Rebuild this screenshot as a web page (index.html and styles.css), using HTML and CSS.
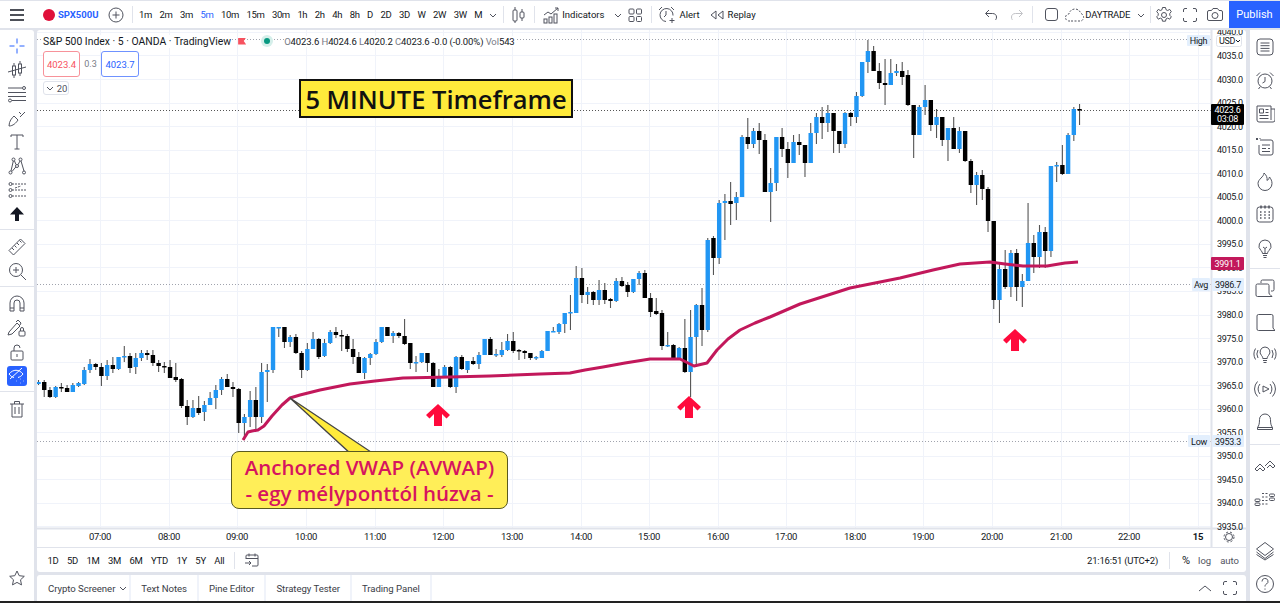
FILE: index.html
```html
<!DOCTYPE html>
<html>
  <head>
    <title>S&amp;P 500 Index - TradingView</title>
    <meta charset="UTF-8" />
    <link rel="stylesheet" href="styles.css">
  </head>

  <body>
    <div class="topbar">
      <div class="hamburger">
        <svg class="ic" width="20" height="20" viewBox="0 0 20 20"><path d="M3 5h14M3 10h14M3 15h14" stroke="#131722" stroke-width="1.5"/></svg>
      </div>
      <div class="symbol">
        <span class="symbol_dot"></span>
        <span class="symbol_name">SPX500USD</span>
      </div>
      <svg class="ic plus" width="18" height="18" viewBox="0 0 18 18"><circle cx="9" cy="9" r="7"/><path d="M9 5.500v7M5.500 9h7"/></svg>
      <span class="sep"></span>
      <div class="intervals">
        <span>1m</span><span>2m</span><span>3m</span><span class="current">5m</span><span>10m</span><span>15m</span><span>30m</span><span>1h</span><span>2h</span><span>4h</span><span>8h</span><span>D</span><span>2D</span><span>3D</span><span>W</span><span>2W</span><span>3W</span><span>M</span>
      </div>
      <svg class="ic chevron" width="10" height="10" viewBox="0 0 10 10"><path d="M2 4l3 3 3-3"/></svg>
      <span class="sep sep_candle"></span>
      <svg class="ic tool_candle" width="18" height="20" viewBox="0 0 18 20"><path d="M5 2v3M5 16v2M12 4v3M12 13v3"/><rect x="3" y="5" width="4" height="11" rx="1"/><rect x="10" y="7" width="4" height="6" rx="1"/></svg>
      <span class="sep sep_ind"></span>
      <svg class="ic tool_ind" width="20" height="20" viewBox="0 0 20 20"><path d="M2 10l4-3 3 2 7-6M13 3h3v3"/><rect x="2" y="14" width="3" height="4"/><rect x="7" y="12" width="3" height="6"/><rect x="12" y="9" width="3" height="9"/></svg>
      <span class="tb_label ind_label">Indicators</span>
      <svg class="ic chevron ind_chevron" width="10" height="10" viewBox="0 0 10 10"><path d="M2 4l3 3 3-3"/></svg>
      <svg class="ic tool_grid" width="16" height="16" viewBox="0 0 16 16"><rect x="2" y="2" width="5" height="5" rx="1"/><rect x="9.500" y="2" width="5" height="5" rx="1"/><rect x="2" y="9.500" width="5" height="5" rx="1"/><rect x="9.500" y="9.500" width="5" height="5" rx="1"/></svg>
      <span class="sep sep_alert"></span>
      <svg class="ic tool_alert" width="20" height="20" viewBox="0 0 20 20"><path d="M9 16.500a6.500 6.500 0 1 1 7-6M9 6v4l-2 2M2 5l3-3M17 5l-3-3M15 13v5M12.500 15.500h5"/></svg>
      <span class="tb_label alert_label">Alert</span>
      <svg class="ic tool_replay" width="18" height="14" viewBox="0 0 18 14"><path d="M8 3L3 7l5 4zM15 3l-5 4 5 4z"/></svg>
      <span class="tb_label replay_label">Replay</span>

      <div class="topbar_right">
        <svg class="ic" width="16" height="16" viewBox="0 0 16 16"><path d="M6 3L2.500 6.500 6 10M3 6.500h6.500c2.500 0 4 1.500 4 3.500s-.5 2-1 3"/></svg>
        <svg class="ic redo" width="16" height="16" viewBox="0 0 16 16"><path d="M10 3l3.500 3.500L10 10M13 6.500H6.500C4 6.500 2.500 8 2.500 10s.5 2 1 3"/></svg>
        <span class="sep sep_redo"></span>
        <span class="layout_box"></span>
        <svg class="ic cloud" width="20" height="14" viewBox="0 0 20 14"><path d="M5 13H4a3.500 3.500 0 0 1 0-7c.5-3 3-5 6-5s5 2 6 4.500a4 4 0 0 1 0 7.500z" stroke-dasharray="2 1.500"/></svg>
        <span class="tb_label layout_name">DAYTRADE</span>
        <svg class="ic chevron" width="10" height="10" viewBox="0 0 10 10"><path d="M2 4l3 3 3-3"/></svg>
        <span class="sep sep_layout"></span>
        <svg class="ic gear" width="18" height="18" viewBox="0 0 18 18"><path d="M7.500 1.500h3l.5 2.200 1.700.8 2-1.100 1.600 2.300-1.500 1.600v2l1.500 1.500-1.600 2.400-2-1.100-1.700.9-.5 2.200h-3l-.5-2.200-1.700-.9-2 1.100-1.600-2.400 1.500-1.500v-2L1.700 5.700l1.600-2.300 2 1.100L7 3.700z"/><circle cx="9" cy="9" r="2.500"/></svg>
        <svg class="ic full" width="16" height="16" viewBox="0 0 16 16"><path d="M1.500 5V3a1.500 1.500 0 0 1 1.500-1.500h2M11 1.500h2A1.500 1.500 0 0 1 14.500 3v2M14.500 11v2a1.500 1.500 0 0 1-1.500 1.500h-2M5 14.500H3A1.500 1.500 0 0 1 1.500 13v-2"/></svg>
        <svg class="ic camera" width="18" height="16" viewBox="0 0 18 16"><path d="M3 3.500h2.500L7 1.500h4.500l1.500 2h2a1.500 1.500 0 0 1 1.500 1.500v7a1.500 1.500 0 0 1-1.500 1.500H3A1.500 1.500 0 0 1 1.500 12V5A1.500 1.500 0 0 1 3 3.500z"/><circle cx="9" cy="8.500" r="3"/></svg>
        <button class="publish">Publish</button>
      </div>
    </div>

    <div class="main">
      <div class="left_tools">
        <div class="tool"><svg class="ic blue" width="20" height="20" viewBox="0 0 20 20"><path d="M10 2.500v5M10 12.500v5M2.500 10h5M12.500 10h5"/></svg></div>
        <div class="tool"><svg class="ic" width="20" height="20" viewBox="0 0 20 20"><path d="M1 12l18-5M7 3v3M7 15v3M13 1v3M13 13v3"/><rect x="5.500" y="6" width="3" height="9"/><rect x="11.500" y="4" width="3" height="9"/></svg></div>
        <div class="tool"><svg class="ic" width="20" height="20" viewBox="0 0 20 20"><path d="M1 4h14M1 8.500h18M1 12.500h18M5 16.500h14"/><circle cx="17" cy="4" r="1.500"/><circle cx="3" cy="16.500" r="1.500"/></svg></div>
        <div class="tool"><svg class="ic" width="20" height="20" viewBox="0 0 20 20"><path d="M2 18c0-5 3-8 5-10l4 4c-2 3-5 6-9 6zM13 9l5-5M12 4l2 2"/></svg></div>
        <div class="tool"><svg class="ic" width="20" height="20" viewBox="0 0 20 20"><path d="M4 5V3h12v2M10 3v14M7.500 17h5"/></svg></div>
        <div class="tool"><svg class="ic" width="20" height="20" viewBox="0 0 20 20"><circle cx="3.500" cy="16.500" r="1.500"/><circle cx="6.500" cy="3.500" r="1.500"/><circle cx="13.500" cy="3.500" r="1.500"/><circle cx="10" cy="10" r="1.500"/><circle cx="17" cy="16.500" r="1.500"/><path d="M4 15L6.300 5M7.500 5L9 8.500M11 8.700L13 5M14 5l3 10M5 15.500L8.800 11"/></svg></div>
        <div class="tool"><svg class="ic" width="20" height="20" viewBox="0 0 20 20"><circle cx="3.500" cy="4" r="1.500"/><circle cx="3.500" cy="10" r="1.500"/><circle cx="3.500" cy="16" r="1.500"/><path d="M5 4h14M5 10h14M5 16h14M8 8l6-2" stroke-dasharray="2 1"/></svg></div>
        <div class="tool"><svg width="20" height="20" viewBox="0 0 20 20"><path d="M10 3l7 7.500h-5V17H8v-6.500H3z" fill="#131722"/></svg></div>
        <div class="tool_sep"></div>
        <div class="tool"><svg class="ic" width="20" height="20" viewBox="0 0 20 20"><path d="M2 13.500L13.500 2 18 6.500 6.500 18zM5 11l2 2M7.500 8.500l2 2M10 6l2 2M12.500 3.500l2 2"/></svg></div>
        <div class="tool"><svg class="ic" width="20" height="20" viewBox="0 0 20 20"><circle cx="9" cy="9" r="6.500"/><path d="M9 6v6M6 9h6M14 14l5 5"/></svg></div>
        <div class="tool_sep"></div>
        <div class="tool"><svg class="ic" width="20" height="20" viewBox="0 0 20 20"><path d="M3 17V9a7 7 0 0 1 14 0v8h-4V9a3 3 0 0 0-6 0v8zM3 14h4M13 14h4"/></svg></div>
        <div class="tool"><svg class="ic" width="20" height="20" viewBox="0 0 20 20"><path d="M2 14L10 5l3 3-8 8-4 1zM9 4l2-2 3 3-1 2"/><rect x="12" y="13" width="6" height="5" rx="1"/><path d="M13.500 13v-2a1.500 1.500 0 0 1 3 0v2"/></svg></div>
        <div class="tool"><svg class="ic" width="20" height="20" viewBox="0 0 20 20"><rect x="4" y="9" width="12" height="9" rx="1"/><path d="M7 9V6a3 3 0 0 1 6 0M10 12v3"/></svg></div>
        <div class="tool tool_on"><svg class="ic white" width="18" height="18" viewBox="0 0 18 18"><path d="M1 7c4-5 10-5 14 0-1.500 2-3 3-5 3.500M1 7c1.500 2 3 3 5 3.500M2 12L14 1M8 14h.5M12 12h.5M12 16h.5M15 14h.5"/></svg></div>
        <div class="tool_sep"></div>
        <div class="tool"><svg class="ic" width="20" height="20" viewBox="0 0 20 20"><path d="M3 5h14M7.500 5V2.500h5V5M5 5v13h10V5M8 8v7M12 8v7"/></svg></div>
        <div class="tool star"><svg class="ic" width="18" height="18" viewBox="0 0 18 18"><path d="M9 2l2.200 4.700 5.100.6-3.800 3.500 1 5.100L9 13.400l-4.500 2.500 1-5.100L1.700 7.300l5.100-.6z"/></svg></div>
      </div>

      <div class="center">
        <div class="chart_card">
          <div class="chart_wrap">
            <svg id="chart" class="chart_svg" width="1209" height="517" viewBox="37 30 1209 517"></svg>

            <div class="legend">
              <div class="legend_row">
                <span class="legend_title">S&amp;P 500 Index · 5 · OANDA · TradingView</span>
                <span class="legend_flag"></span>
                <span class="legend_dot"></span>
                <span class="ohlc"><i>O</i>4023.6 <i>H</i>4024.6 <i>L</i>4020.2 <i>C</i>4023.6 -0.0 (-0.00%) <i>Vol</i>543</span>
              </div>
              <div class="quote_row">
                <span class="quote sell">4023.4</span>
                <span class="spread">0.3</span>
                <span class="quote buy">4023.7</span>
              </div>
              <div class="lots">
                <svg class="ic" width="10" height="10" viewBox="0 0 10 10"><path d="M2 4l3 3 3-3"/></svg>
                <span>20</span>
              </div>
            </div>

            <div class="timeframe_note">5 MINUTE Timeframe</div>
            <div class="avwap_note">Anchored VWAP (AVWAP)<br>- egy mélyponttól húzva -</div>
          </div>

          <div class="range_bar">
            <div class="ranges"><span>1D</span><span>5D</span><span>1M</span><span>3M</span><span>6M</span><span>YTD</span><span>1Y</span><span>5Y</span><span>All</span></div>
            <span class="sep sep_range"></span>
            <svg class="ic" width="16" height="16" viewBox="0 0 16 16"><path d="M2 7V4a1 1 0 0 1 1-1h10a1 1 0 0 1 1 1v9a1 1 0 0 1-1 1H8M2 6.500h12M5 1.500v3M11 1.500v3M1 11h6M5 9l2 2-2 2"/></svg>
            <div class="range_right">
              <span class="clock">21:16:51 (UTC+2)</span>
              <span class="sep"></span>
              <span class="pct">%</span>
              <span class="log">log</span>
              <span class="auto">auto</span>
            </div>
          </div>
        </div>

        <div class="tabs">
          <div class="tab tab_first">Crypto Screener
            <svg class="ic" width="10" height="10" viewBox="0 0 10 10"><path d="M2 4l3 3 3-3"/></svg>
          </div>
          <div class="tab">Text Notes</div>
          <div class="tab">Pine Editor</div>
          <div class="tab">Strategy Tester</div>
          <div class="tab">Trading Panel</div>
          <div class="tabs_right">
            <svg class="ic" width="14" height="10" viewBox="0 0 14 10"><path d="M1 8l6-5 6 5"/></svg>
            <svg class="ic" width="16" height="16" viewBox="0 0 16 16"><path d="M1.500 5V3a1.500 1.500 0 0 1 1.500-1.500h2M11 1.500h2A1.500 1.500 0 0 1 14.500 3v2M14.500 11v2a1.500 1.500 0 0 1-1.500 1.500h-2M5 14.500H3A1.500 1.500 0 0 1 1.500 13v-2"/></svg>
          </div>
        </div>
      </div>

      <div class="right_tools">
        <div class="side"><svg class="ic" width="20" height="20" viewBox="0 0 20 20"><rect x="2" y="2" width="16" height="16" rx="3"/><path d="M5.500 6h9M5.500 8.700h9M5.500 11.400h9M5.500 14h9"/></svg></div>
        <div class="side"><svg class="ic" width="20" height="20" viewBox="0 0 20 20"><circle cx="10" cy="11" r="7"/><path d="M10 7v4.500L7.500 13M1.500 6L5 2.500M18.500 6L15 2.500M5 17l-1.500 2M15 17l1.500 2"/></svg></div>
        <div class="side"><svg class="ic" width="20" height="20" viewBox="0 0 20 20"><path d="M16 16V2H2v14a2 2 0 0 0 2 2h14a2 2 0 0 0 2-2V5h-4M4.500 5h4v4h-4zM10.500 5.500h3M10.500 8.500h3M4.500 11.500h9M4.500 14.500h9"/></svg></div>
        <div class="side"><svg class="ic" width="20" height="20" viewBox="0 0 20 20"><path d="M5 3h11a2 2 0 0 1 2 2v11a2 2 0 0 1-2 2H6a2 2 0 0 1-2-2V8M7 8h8M7 11.500h4M13 11.500h2M7 14.500h8M1 1l2 2M3 1L1 3M5 1v1" /></svg></div>
        <div class="side"><svg class="ic" width="20" height="20" viewBox="0 0 20 20"><path d="M9 2C9 6 3 8 3 12.500a7 7 0 0 0 14 0c0-2.500-1-4.500-2.500-6.500-.5 2-1.500 3-2.500 3.500C12.500 7 11.500 4 9 2z"/></svg></div>
        <div class="side"><svg class="ic" width="20" height="20" viewBox="0 0 20 20"><rect x="2" y="3" width="16" height="15" rx="2.500"/><path d="M6 1.500v3M10 1.500v3M14 1.500v3M5 8h1.500M9.200 8h1.500M13.500 8h1.500M5 11h1.500M9.200 11h1.500M13.500 11h1.500M5 14h1.500M9.200 14h1.500M13.500 14h1.500" stroke-width="1.500"/></svg></div>
        <div class="side"><svg class="ic" width="20" height="20" viewBox="0 0 20 20"><path d="M10 2a6 6 0 0 0-4 10.500c1 1 1.500 2 1.500 3h5c0-1 .5-2 1.500-3A6 6 0 0 0 10 2zM8 17.500h4M8.500 19.500h3M10 15.500v-5M8 9l2 1.500L12 9"/></svg></div>
        <div class="side_sep"></div>
        <div class="side"><svg class="ic" width="22" height="20" viewBox="0 0 22 20"><path d="M7 5V3.500A1.500 1.500 0 0 1 8.500 2h10A1.500 1.500 0 0 1 20 3.500v8a1.500 1.500 0 0 1-1.500 1.500H17M3.500 6h10A1.500 1.500 0 0 1 15 7.500V15a1.500 1.500 0 0 0 1 1.500l2 2H3.500A1.500 1.500 0 0 1 2 17V7.500A1.500 1.500 0 0 1 3.500 6z"/></svg></div>
        <div class="side"><svg class="ic" width="20" height="20" viewBox="0 0 20 20"><path d="M3.500 2.500h13A1.500 1.500 0 0 1 18 4v12l2 2.500H3.500A1.500 1.500 0 0 1 2 17V4a1.500 1.500 0 0 1 1.500-1.500z"/></svg></div>
        <div class="side"><svg class="ic" width="24" height="20" viewBox="0 0 24 20"><path d="M12 2a5 5 0 0 0-3.500 8.500c1 1 1.300 2 1.300 3h4.400c0-1 .3-2 1.300-3A5 5 0 0 0 12 2zM10 15.500h4M10.500 17.500h3M5 5a8 8 0 0 0 0 8M2.500 3.500a11 11 0 0 0 0 11M19 5a8 8 0 0 1 0 8M21.500 3.500a11 11 0 0 1 0 11"/></svg></div>
        <div class="side"><svg class="ic" width="22" height="20" viewBox="0 0 22 20"><path d="M9 7l6 3-6 3zM6 5a7.500 7.500 0 0 0 0 10M3.500 2.500a11 11 0 0 0 0 15M16 5a7.500 7.500 0 0 1 0 10M18.500 2.500a11 11 0 0 1 0 15"/></svg></div>
        <div class="side"><svg class="ic" width="20" height="20" viewBox="0 0 20 20"><path d="M10 2a5.500 5.500 0 0 0-5.500 5.500c0 4-.5 6-2 8h15c-1.500-2-2-4-2-8A5.500 5.500 0 0 0 10 2zM2.500 15.500v2h15v-2"/></svg></div>
        <div class="side_sep side_sep_low"></div>
        <div class="side"><svg class="ic" width="22" height="18" viewBox="0 0 22 18"><path d="M1 11l5-5 4 4 1 1-2 2-3-3-3 3zM11 8l5-5 5 5-2 2-3-3-3 3" /></svg></div>
        <div class="side"><svg class="ic dotted" width="22" height="18" viewBox="0 0 22 18"><path d="M9 2v1M9 5.500v1M9 9v1M9 12.500v1M12.500 2v1M12.500 5.500v1M12.500 9v1M12.500 12.500v1" stroke-width="2"/><rect x="1" y="8" width="5" height="2.500" rx="1"/><rect x="1" y="12" width="5" height="2.500" rx="1"/><rect x="15.500" y="3" width="5" height="2.500" rx="1"/><rect x="15.500" y="7" width="5" height="2.500" rx="1"/></svg></div>
        <div class="side side_bottom"><svg class="ic" width="20" height="20" viewBox="0 0 20 20"><path d="M10 1.500L18.500 8 10 14.500 1.500 8zM1.500 11l8.500 6.500 8.500-6.500M1.500 13.500L10 19l8.500-5.500"/></svg></div>
        <div class="side"><svg class="ic" width="22" height="22" viewBox="0 0 22 22"><circle cx="11" cy="11" r="8.500"/><path d="M8 8.500a3 3 0 1 1 4.500 2.500c-1 .6-1.500 1.200-1.500 2.500M11 15.500v1.200"/></svg></div>
      </div>
    </div>
    <div class="bottom_strip"></div>

    <script src="chart.js"></script>
  </body>
</html>
```

FILE: styles.css
```css
* {
  box-sizing: border-box;
}

body {
  margin: 0;
  width: 1280px;
  height: 603px;
  overflow: hidden;
  display: flex;
  flex-direction: column;
  background: #e0e3eb;
  font-family: "Roboto", "Noto Sans", sans-serif;
  font-size: 9.5px;
  color: #131722;
}

svg {
  display: block;
  flex: none;
}

.ic {
  fill: none;
  stroke: #50535e;
  stroke-width: 1;
}

.ic.blue {
  stroke: #2962ff;
}

.ic.white {
  stroke: #fff;
}

/* top bar */
.topbar {
  height: 28px;
  flex: none;
  display: flex;
  align-items: center;
  background: #fff;
  border-top: 1px solid #e0e3eb;
}

.hamburger {
  margin-left: 7px;
}

.symbol {
  display: flex;
  align-items: center;
  margin-left: 16px;
}

.symbol_dot {
  width: 12px;
  height: 12px;
  border-radius: 50%;
  background: #e0103a;
}

.symbol_name {
  width: 41px;
  margin-left: 3px;
  overflow: hidden;
  white-space: nowrap;
  font-weight: 700;
  color: #2962ff;
}

.plus {
  margin-left: 8px;
}

.sep {
  width: 1px;
  height: 17px;
  background: #e0e3eb;
  flex: none;
}

.topbar > .sep:first-of-type {
  margin-left: 7px;
}

.intervals {
  display: flex;
  gap: 7.65px;
  margin-left: 6px;
  font-size: 9.5px;
  letter-spacing: -0.4px;
}

.current {
  color: #2962ff;
}

.chevron {
  margin-left: 6px;
}

.sep_candle {
  margin-left: 5px;
}

.tool_candle {
  margin-left: 6px;
}

.sep_ind {
  margin-left: 6px;
}

.tool_ind {
  margin-left: 7px;
}

.tb_label {
  margin-left: 5px;
  white-space: nowrap;
}

.ind_label {
  margin-left: 0;
}

.ind_chevron {
  margin-left: 9px;
}

.tool_grid {
  margin-left: 4px;
}

.sep_alert {
  margin-left: 8px;
}

.tool_alert {
  margin-left: 5px;
}

.alert_label {
  margin-left: 2px;
}

.tool_replay {
  margin-left: 8px;
}

.replay_label {
  margin-left: 2px;
}

.topbar_right {
  margin-left: auto;
  display: flex;
  align-items: center;
  height: 100%;
}

.redo {
  margin-left: 10px;
  opacity: 0.35;
}

.sep_redo {
  margin-left: 7px;
}

.layout_box {
  width: 13px;
  height: 13px;
  margin-left: 12px;
  border: 1px solid #50535e;
  border-radius: 3px;
}

.cloud {
  margin-left: 7px;
}

.layout_name {
  margin-left: 0;
  letter-spacing: -0.3px;
}

.sep_layout {
  margin-left: 4px;
}

.gear {
  margin-left: 4px;
}

.full {
  margin-left: 9px;
}

.camera {
  margin-left: 8px;
}

.publish {
  width: 51px;
  height: 100%;
  margin-left: 5px;
  border: none;
  background: #2962ff;
  color: #fff;
  font: inherit;
  font-size: 11px;
}

/* layout under the top bar */
.main {
  flex: 1;
  min-height: 0;
  display: flex;
  margin-top: 2px;
}

.left_tools {
  width: 34px;
  flex: none;
  display: flex;
  flex-direction: column;
  align-items: center;
  padding-top: 4px;
  background: #fff;
  border-top-right-radius: 3px;
}

.tool {
  width: 34px;
  height: 24px;
  display: flex;
  align-items: center;
  justify-content: center;
}

.tool_on {
  width: 20px;
  height: 20px;
  margin: 2px 0;
  background: #2962ff;
  border-radius: 3px;
}

.tool_sep {
  width: 100%;
  height: 1px;
  margin: 3px 0 5px;
  background: #e0e3eb;
}

.star {
  margin-top: auto;
  margin-bottom: 11px;
}

.center {
  width: 1209px;
  flex: none;
  margin: 0 4px 0 3px;
  display: flex;
  flex-direction: column;
  gap: 3px;
}

.chart_card {
  height: 542px;
  flex: none;
  background: #fff;
  border-radius: 3px;
  display: flex;
  flex-direction: column;
  overflow: hidden;
}

.chart_wrap {
  position: relative;
  height: 517px;
  flex: none;
}

/* legend on the chart */
.legend {
  position: absolute;
  top: 4px;
  left: 6px;
}

.legend_row {
  display: flex;
  align-items: center;
  height: 14px;
}

.legend_title {
  font-size: 10.4px;
  white-space: nowrap;
  background: #fff;
}

.legend_flag {
  width: 8px;
  height: 7px;
  margin-left: 7px;
  background: #f7525f;
  clip-path: polygon(0 0, 100% 0, 70% 50%, 100% 100%, 0 100%);
}

.legend_dot {
  width: 6px;
  height: 6px;
  margin-left: 18px;
  border-radius: 50%;
  background: #089981;
  box-shadow: 0 0 0 3px #d5efea;
}

.ohlc {
  margin-left: 14px;
  font-size: 9.5px;
  letter-spacing: -0.1px;
  white-space: nowrap;
  background: #fff;
}

.ohlc i {
  font-style: normal;
  color: #787b86;
}

.quote_row {
  display: flex;
  align-items: center;
  margin-top: 3px;
}

.quote {
  width: 37px;
  height: 26px;
  display: flex;
  align-items: center;
  justify-content: center;
  font-size: 9.5px;
  border-radius: 3px;
  background: #fff;
}

.sell {
  color: #f7525f;
  border: 1px solid #f7929a;
}

.buy {
  width: 38px;
  color: #2962ff;
  border: 1px solid #6f92ff;
}

.spread {
  width: 21px;
  text-align: center;
  font-size: 9px;
  color: #787b86;
}

.lots {
  width: 26px;
  height: 14px;
  margin-top: 4px;
  display: flex;
  align-items: center;
  justify-content: center;
  gap: 2px;
  font-size: 9.5px;
  color: #50535e;
  border: 1px solid #e0e3eb;
  border-radius: 3px;
  background: #fff;
}

.timeframe_note {
  position: absolute;
  left: 262px;
  top: 49px;
  width: 274px;
  height: 39px;
  display: flex;
  align-items: center;
  justify-content: center;
  background: #ffeb3b;
  border: 2px solid #111;
  font-family: "Open Sans", sans-serif;
  font-size: 25.5px;
  font-weight: 600;
  color: #111;
  white-space: nowrap;
}

.avwap_note {
  position: absolute;
  left: 194px;
  top: 421px;
  width: 277px;
  height: 58px;
  display: flex;
  align-items: center;
  justify-content: center;
  text-align: center;
  background: #ffee58;
  border: 1.5px solid #5a5a20;
  border-radius: 8px;
  font-family: "Open Sans", sans-serif;
  font-size: 20.5px;
  line-height: 26px;
  font-weight: 600;
  color: #d6145f;
  white-space: nowrap;
}

/* range bar */
.range_bar {
  flex: 1;
  display: flex;
  align-items: center;
  padding-left: 10.5px;
  border-top: 1px solid #e0e3eb;
  font-size: 9.5px;
}

.ranges {
  display: flex;
  gap: 8.5px;
  letter-spacing: -0.3px;
}

.sep_range {
  margin: 0 9px 0 10px;
}

.range_right {
  margin-left: auto;
  display: flex;
  align-items: center;
  padding-right: 7px;
}

.clock {
  margin-right: 11px;
  letter-spacing: -0.2px;
}

.pct {
  margin-left: 12px;
  font-size: 11px;
}

.log {
  margin-left: 8px;
  color: #50535e;
}

.auto {
  margin-left: 9px;
  color: #50535e;
}

/* bottom tabs */
.tabs {
  height: 26px;
  flex: none;
  display: flex;
  align-items: center;
  background: #fff;
  border-radius: 3px 3px 0 0;
  font-size: 9.6px;
  color: #3a3d46;
}

.tab {
  height: 100%;
  display: flex;
  align-items: center;
  padding: 0 10px;
  border-right: 2px solid #f0f3fa;
  white-space: nowrap;
  letter-spacing: -0.05px;
}

.tab_first {
  gap: 3px;
  padding: 0 1px 0 11px;
}

.tabs_right {
  margin-left: auto;
  display: flex;
  align-items: center;
  gap: 10px;
  padding-right: 8px;
}

/* right bar */
.right_tools {
  width: 30px;
  flex: none;
  display: flex;
  flex-direction: column;
  background: #fff;
}

.side {
  height: 33.5px;
  flex: none;
  display: flex;
  align-items: center;
  justify-content: center;
}

.side_sep {
  height: 1px;
  margin: 3px 0 2.8px;
  background: #e0e3eb;
}

.side_sep_low {
  margin: 5px 0 5px;
}

.side_bottom {
  margin-top: auto;
}

.bottom_strip {
  height: 2px;
  flex: none;
  background: #222;
}

/* chart svg */
.chart_svg text {
  font-family: "Roboto", "Noto Sans", sans-serif;
  font-size: 9px;
  letter-spacing: -0.3px;
  fill: #131722;
}

.chart_svg .tick_hour {
  font-size: 9.5px;
}

.chart_svg .tick_bold {
  font-weight: 700;
}

.chart_svg .on_dark {
  fill: #fff;
}
```

FILE: chart.js
```js
const svg = document.getElementById("chart");
const NS = "http://www.w3.org/2000/svg";

const X0 = 38.5;
const STEP = 5.72;
const CHART_RIGHT = 1211;
const CHART_BOTTOM = 528;

// [b|k, body top, body bottom, wick top, wick bottom], in pixels of the page
const candles = [
  ["b",382,384,380,385],["k",382,390,380,397],["k",390,397,387,398],["b",387,397,386,398],
  ["k",387,388,383,392],["k",388,392,385,392],["b",385,392,383,392],["b",383,386,382,387],
  ["b",370,384,367,385],["b",364,370,359,373],["k",364,367,363,370],["k",367,376,363,386],
  ["b",365,376,360,380],["k",365,369,357,373],["b",357,369,357,370],["b",356,357,346,362],
  ["k",356,368,353,373],["b",358,367,353,374],["b",353,358,350,361],["k",353,355,350,360],
  ["k",355,363,350,366],["k",363,366,360,372],["k",366,367,362,373],["k",367,378,360,378],
  ["k",377,380,363,382],["k",379,406,378,408],["k",406,417,400,425],["b",408,417,400,418],
  ["k",408,413,396,415],["b",405,412,401,421],["b",398,405,392,405],["b",390,398,385,409],
  ["b",379,390,377,395],["k",379,387,374,387],["k",387,389,382,397],["k",389,423,388,433],
  ["b",417,423,414,440],["b",400,417,391,427],["k",400,417,387,430],["b",372,417,363,423],
  ["b",370,372,364,402],["b",327,370,327,373],["b",327,328,327,337],["k",327,342,327,348],
  ["b",337,342,335,347],["k",337,353,334,354],["k",353,370,351,378],["b",349,370,343,371],
  ["b",339,349,332,349],["k",339,357,338,359],["b",343,356,339,357],["b",332,343,330,344],
  ["k",332,335,327,338],["k",335,336,330,351],["k",336,349,334,352],["k",349,357,339,364],
  ["k",357,373,352,373],["b",358,373,357,379],["b",354,358,353,365],["b",342,354,339,355],
  ["b",327,342,327,343],["k",327,336,327,336],["b",333,336,331,343],["k",333,336,332,338],
  ["k",336,344,319,345],["k",343,363,343,369],["b",362,363,356,372],["b",353,362,353,363],
  ["k",353,363,353,372],["k",363,387,362,387],["b",376,387,369,387],["b",367,376,365,378],
  ["k",367,387,366,388],["b",357,387,356,393],["k",357,369,355,370],["b",361,370,361,373],
  ["k",361,364,357,365],["b",355,364,352,369],["b",339,355,339,355],["k",339,355,337,355],
  ["b",354,355,349,357],["b",350,355,342,357],["b",341,350,334,351],["k",341,351,332,353],
  ["k",350,351,349,360],["k",351,353,350,359],["k",353,358,353,360],["b",357,358,356,360],
  ["b",351,358,350,358],["b",331,351,331,351],["b",331,332,327,332],["b",324,332,323,334],
  ["b",313,324,313,333],["b",312,313,295,330],["b",278,313,266,313],["k",278,295,268,303],
  ["b",292,295,287,304],["k",292,300,291,305],["b",290,300,280,305],["k",290,300,283,304],
  ["k",299,301,298,308],["b",281,301,278,302],["k",281,286,277,287],["k",285,292,282,297],
  ["b",279,292,279,293],["b",273,279,271,285],["k",273,298,270,298],["k",298,312,293,317],
  ["k",311,314,298,315],["k",313,346,310,350],["b",345,346,332,347],["k",345,358,344,358],
  ["b",348,358,347,360],["k",348,372,319,373],["b",337,372,310,397],["b",305,337,304,367],
  ["k",305,330,288,346],["b",240,330,238,332],["k",238,258,236,275],["b",203,258,200,264],
  ["b",201,203,194,240],["k",201,204,182,225],["b",197,203,192,220],["b",137,197,135,197],
  ["k",137,144,118,149],["b",131,144,128,148],["k",131,140,123,154],["k",140,192,134,192],
  ["b",183,192,168,222],["b",137,183,137,191],["k",137,149,128,157],["k",149,163,142,178],
  ["b",142,163,135,163],["k",142,145,134,155],["k",145,163,145,177],["b",133,163,123,163],
  ["b",117,133,113,144],["k",117,123,107,139],["b",113,123,105,132],["k",113,131,113,153],
  ["k",131,144,131,153],["b",113,144,112,148],["k",113,117,112,126],["b",96,117,92,123],
  ["b",62,96,62,97],["b",51,62,40,73],["k",51,71,46,71],["k",71,83,63,89],
  ["k",83,85,59,105],["b",73,85,59,85],["b",71,73,64,76],["k",71,77,62,85],
  ["k",75,105,70,106],["k",105,135,105,158],["b",107,135,105,135],["b",100,107,85,115],
  ["k",100,125,100,131],["b",117,125,109,138],["k",117,140,117,146],["b",128,140,128,161],
  ["k",128,149,117,149],["b",131,149,127,153],["k",131,161,131,162],["k",161,185,159,193],
  ["b",175,185,172,205],["k",175,189,170,200],["k",189,221,187,232],["k",221,300,221,309],
  ["b",269,300,263,323],["k",269,287,250,289],["b",253,287,250,297],["k",253,287,249,301],
  ["b",281,287,274,307],["b",243,281,203,281],["k",243,257,235,273],["b",232,257,225,268],
  ["k",232,251,227,268],["b",166,251,166,257],["b",165,166,162,182],["k",165,174,145,175],
  ["b",135,174,133,174],["b",109,135,107,141],["k",109,110,104,125]
];

const vwap = [
  [243,440],[248,432],[252,431],[258,430],[264,426],[272,416],[282,405],[290,398],[300,395],
  [320,390],[350,384],[375,381],[403,378],[450,377],[490,376],[540,374],[570,373],[585,370],
  [603,367],[625,363],[650,359],[680,359],[688,363],[694,366],[707,363],[717,350],[728,339],
  [740,330],[755,323],[770,317],[800,304],[850,288],[900,278],[933,270],[960,264],[990,262],
  [1005,264],[1023,266],[1047,266],[1065,263],[1078,262]
];

const hours = [
  [100,"07:00"],[169,"08:00"],[237,"09:00"],[306,"10:00"],[375,"11:00"],[443,"12:00"],
  [512,"13:00"],[581,"14:00"],[649,"15:00"],[718,"16:00"],[786,"17:00"],[855,"18:00"],
  [923,"19:00"],[992,"20:00"],[1061,"21:00"],[1129,"22:00"]
];

const add = (name, attrs, text) => {
  const el = document.createElementNS(NS, name);
  Object.keys(attrs).forEach((k) => el.setAttribute(k, attrs[k]));
  if (text) el.textContent = text;
  svg.appendChild(el);
  return el;
};

const priceY = (p) => 79 + (4030 - p) * 4.71;

const drawGrid = () => {
  for (let p = 4040; p >= 3935; p -= 5) {
    const y = Math.round(priceY(p)) + 0.5;
    add("line", { x1: 37, x2: CHART_RIGHT, y1: y, y2: y, stroke: "#f0f3fa" });
  }
  hours.concat([[1198, "15"]]).forEach((h) => {
    add("line", { x1: h[0] + 0.5, x2: h[0] + 0.5, y1: 30, y2: CHART_BOTTOM, stroke: "#f0f3fa" });
  });
};

const drawDotted = () => {
  [[39, "#a0a3ad"], [110, "#555"], [284, "#a0a3ad"], [441, "#a0a3ad"]].forEach((d) => {
    add("line", {
      x1: 37, x2: CHART_RIGHT, y1: d[0] + 0.5, y2: d[0] + 0.5,
      stroke: d[1], "stroke-dasharray": "1 2"
    });
  });
};

const drawCandles = () => {
  candles.forEach((c, i) => {
    const x = X0 + STEP * i;
    add("line", { x1: x, x2: x, y1: c[3], y2: c[4], stroke: "#555", "stroke-width": 1.1 });
    add("rect", {
      x: x - 2.2, y: c[1], width: 4.4, height: Math.max(c[2] - c[1], 1.5),
      fill: c[0] === "b" ? "#2196f3" : "#000"
    });
  });
};

const drawOverlays = () => {
  add("polyline", {
    points: vwap.map((p) => p.join(",")).join(" "),
    fill: "none", stroke: "#c2185b", "stroke-width": 3, "stroke-linejoin": "round"
  });
  add("polygon", {
    points: "290,398 351,454 374,454", fill: "#ffeb3b", stroke: "#444", "stroke-width": 1.3
  });
  [[438, 404], [689, 396], [1015, 329]].forEach((a) => {
    add("path", {
      d: `M${a[0]} ${a[1]}l12 11-3.500 3.500-4.500-4.500v12h-8v-12l-4.500 4.500-3.500-3.500z`, fill: "#ff0a3c"
    });
  });
};

const drawAxes = () => {
  add("line", { x1: 37, x2: 1246, y1: CHART_BOTTOM + 0.5, y2: CHART_BOTTOM + 0.5, stroke: "#e0e3eb", "stroke-width": 2 });
  add("line", { x1: CHART_RIGHT + 0.5, x2: CHART_RIGHT + 0.5, y1: 30, y2: 547, stroke: "#e0e3eb", "stroke-width": 2 });

  for (let p = 4040; p >= 3935; p -= 5) {
    add("text", { x: 1217, y: priceY(p) + 3.5 }, p.toFixed(1));
  }
  hours.forEach((h) => {
    add("text", { x: h[0], y: 540, "text-anchor": "middle", class: "tick_hour" }, h[1]);
  });
  add("text", { x: 1198, y: 540, "text-anchor": "middle", class: "tick_hour tick_bold" }, "15");
  add("circle", { cx: 1229, cy: 537, r: 3.5, fill: "none", stroke: "#50535e" });
  add("circle", { cx: 1229, cy: 537, r: 5, fill: "none", stroke: "#50535e", "stroke-dasharray": "2 2" });
};

const tag = (x, y, w, h, fill, label, dark) => {
  add("rect", { x, y, width: w, height: h, fill, rx: 1 });
  add("text", { x: x + w / 2, y: y + h / 2 + 3.5, "text-anchor": "middle", class: dark ? "on_dark" : "" }, label);
};

const drawTags = () => {
  tag(1187, 35, 23, 11, "#e3effd", "High");
  tag(1192, 278, 18, 13, "#e3effd", "Avg");
  tag(1188, 435, 22, 12, "#e3effd", "Low");
  tag(1212, 278, 32, 13, "#e3effd", "3986.7");
  tag(1212, 435, 32, 12, "#e3effd", "3953.3");
  tag(1211, 257, 33, 13, "#c2185b", "3991.1", true);

  add("rect", { x: 1211, y: 104, width: 33, height: 21, fill: "#000", rx: 1 });
  add("text", { x: 1227.5, y: 113, "text-anchor": "middle", class: "on_dark" }, "4023.6");
  add("text", { x: 1227.5, y: 122, "text-anchor": "middle", class: "on_dark" }, "03:08");

  add("rect", { x: 1216.5, y: 35.5, width: 25, height: 11, fill: "#fff", stroke: "#e0e3eb", rx: 2 });
  add("text", { x: 1219, y: 44 }, "USD");
  add("path", { d: "M1236 40l2 2 2-2", fill: "none", stroke: "#131722" });
};

drawGrid();
drawDotted();
drawCandles();
drawOverlays();
drawAxes();
drawTags();
```
